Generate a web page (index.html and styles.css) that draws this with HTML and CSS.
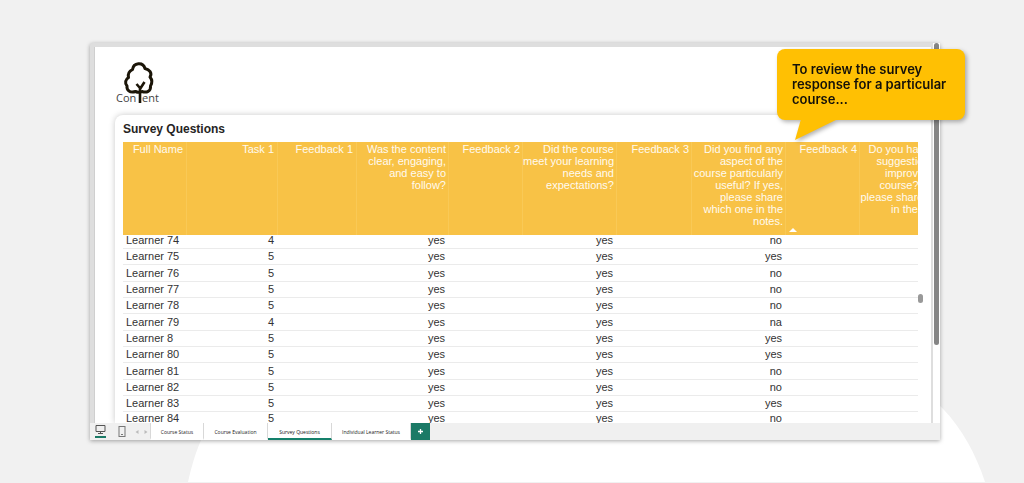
FILE: index.html
```html
<!DOCTYPE html>
<html lang="en">
<head>
<meta charset="utf-8">
<title>Survey Questions</title>
<link rel="stylesheet" href="styles.css">
</head>
<body>
<svg class="backdrop" viewBox="0 0 1024 483" preserveAspectRatio="none" aria-hidden="true"><path d="M188 482C198 438 215 390 290 360H870C930 385 966 424 985 482Z" fill="#fff"/></svg>
<main class="window">
  <div class="report">
    <div class="page">
      <svg class="logo" viewBox="0 0 48 46" role="img" aria-label="Content">
        <g fill="none" stroke="#1b1508" stroke-width="3" stroke-linecap="round" stroke-linejoin="round">
          <path d="M19.500 30.500C13.500 32.500 10.500 28.500 11 25C8.500 22 9.500 18.500 12.500 16.500C11.500 12 14.500 9.500 16.500 8.500C17.500 1.500 27 0.500 29 7.500C33.500 8.500 36.500 12 34 16C36.500 19 36 22.500 34.500 25C35 30.500 30.500 32 26 30.500Q23 32 19.500 30.500Z"/>
          <path d="M24 42V25M24 27L20.500 23M24 28L28.500 21" stroke-width="2.600" stroke-linecap="butt"/>
        </g>
        <text x="0" y="41" class="logo-text">Con</text><text x="26" y="41" class="logo-text">ent</text>
      </svg>
      <section class="card">
        <h1 class="title">Survey Questions</h1>
        <div class="table-area">
          <div class="table-wrap">
            <table class="survey">
              <colgroup><col class="c-name"><col class="c-task"><col class="c-f1"><col class="c-q1"><col class="c-f2"><col class="c-q2"><col class="c-f3"><col class="c-q3"><col class="c-f4"><col class="c-q4"></colgroup>
              <thead><tr>
                <th>Full Name</th><th>Task 1</th><th>Feedback 1</th>
                <th>Was the content<br>clear, engaging,<br>and easy to<br>follow?</th>
                <th>Feedback 2</th>
                <th>Did the course<br>meet your learning<br>needs and<br>expectations?</th>
                <th>Feedback 3</th>
                <th>Did you find any<br>aspect of the<br>course particularly<br>useful? If yes,<br>please share<br>which one in the<br>notes.</th>
                <th class="sorted">Feedback 4<svg class="sort" viewBox="0 0 8 4" aria-hidden="true"><path d="M0 4L4 0L8 4Z" fill="#fff"/></svg></th>
                <th>Do you have any<br>suggestions for<br>improving the<br>course? If yes,<br>please share them<br>in the notes.</th>
              </tr></thead>
              <tbody>
                <tr><td>Learner 74</td><td>4</td><td></td><td>yes</td><td></td><td>yes</td><td></td><td>no</td><td></td><td></td></tr>
                <tr><td>Learner 75</td><td>5</td><td></td><td>yes</td><td></td><td>yes</td><td></td><td>yes</td><td></td><td></td></tr>
                <tr><td>Learner 76</td><td>5</td><td></td><td>yes</td><td></td><td>yes</td><td></td><td>no</td><td></td><td></td></tr>
                <tr><td>Learner 77</td><td>5</td><td></td><td>yes</td><td></td><td>yes</td><td></td><td>no</td><td></td><td></td></tr>
                <tr><td>Learner 78</td><td>5</td><td></td><td>yes</td><td></td><td>yes</td><td></td><td>no</td><td></td><td></td></tr>
                <tr><td>Learner 79</td><td>4</td><td></td><td>yes</td><td></td><td>yes</td><td></td><td>na</td><td></td><td></td></tr>
                <tr><td>Learner 8</td><td>5</td><td></td><td>yes</td><td></td><td>yes</td><td></td><td>yes</td><td></td><td></td></tr>
                <tr><td>Learner 80</td><td>5</td><td></td><td>yes</td><td></td><td>yes</td><td></td><td>yes</td><td></td><td></td></tr>
                <tr><td>Learner 81</td><td>5</td><td></td><td>yes</td><td></td><td>yes</td><td></td><td>no</td><td></td><td></td></tr>
                <tr><td>Learner 82</td><td>5</td><td></td><td>yes</td><td></td><td>yes</td><td></td><td>no</td><td></td><td></td></tr>
                <tr><td>Learner 83</td><td>5</td><td></td><td>yes</td><td></td><td>yes</td><td></td><td>yes</td><td></td><td></td></tr>
                <tr><td>Learner 84</td><td>5</td><td></td><td>yes</td><td></td><td>yes</td><td></td><td>no</td><td></td><td></td></tr>
              </tbody>
            </table>
          </div>
          <div class="inner-scroll"><div class="inner-thumb"></div></div>
        </div>
      </section>
    </div>
    <div class="outer-scroll"><div class="outer-thumb"></div></div>
  </div>
  <nav class="tabs" aria-label="Report pages">
    <button class="view active" aria-label="Desktop layout"><svg viewBox="0 0 11 9"><path d="M1 0.500H10V6.500H1ZM5.500 6.500V8.500M3 8.500H8" fill="none" stroke="#555" stroke-width="1"/></svg></button>
    <button class="view mobile" aria-label="Mobile layout"><svg viewBox="0 0 8 11"><rect x="1" y="0.500" width="6" height="10" fill="none" stroke="#777"/><path d="M3 8.500H5" stroke="#777"/></svg></button>
    <button class="arrow" aria-label="Previous pages"><svg viewBox="0 0 4 4"><path d="M3.500 0L0.500 2L3.500 4Z" fill="#bbb"/></svg></button>
    <button class="arrow" aria-label="Next pages"><svg viewBox="0 0 4 4"><path d="M0.500 0L3.500 2L0.500 4Z" fill="#bbb"/></svg></button>
    <button class="tab tab-first">Course Status</button>
    <button class="tab">Course Evaluation</button>
    <button class="tab current">Survey Questions</button>
    <button class="tab tab-last">Individual Learner Status</button>
    <button class="add" aria-label="New page"><svg viewBox="0 0 7 7"><path d="M3.500 1V6M1 3.500H6" stroke="#fff" stroke-width="1.300"/></svg></button>
  </nav>
  <aside class="callout">To review the survey<br>response for a particular<br>course...
    <svg class="tail" viewBox="0 0 46 22" aria-hidden="true"><path d="M7 0H44L1 21Z" fill="#ffc003"/></svg>
  </aside>
</main>
</body>
</html>
```
FILE: styles.css
```css
* { box-sizing: border-box; }
body { margin: 0; min-height: 100vh; background: #f1f1f1; font-family: "Liberation Sans", Arial, sans-serif; color: #333; position: relative; display: flex; overflow: hidden; }
button { border: 0; margin: 0; padding: 0; background: none; font: inherit; color: inherit; }
svg { display: block; }
.backdrop { position: absolute; inset: 0; width: 100%; height: 100%; }

.window { position: relative; flex: 1; min-width: 0; display: flex; flex-direction: column; margin: 43px 84px 43px 90px; background: #dedede; border-radius: 3px 3px 0 0; box-shadow: 0 1px 4px rgba(0, 0, 0, .35); }
.report { flex: 1; display: flex; min-width: 0; min-height: 0; }
.page { flex: 1; min-width: 0; margin: 4px 0 0 4px; border-left: 1px solid #cfcfcf; border-right: 2px solid #dedede; background: #fff; padding: 14px 0 0 20px; display: flex; flex-direction: column; }
.logo { width: 48px; height: 46px; margin-left: 1px; }
.logo-text { font: 11px "Open Sans", sans-serif; fill: #444; }

.card { flex: 1; margin-top: 8px; padding: 7px 7px 0 8px; border-radius: 8px 8px 0 0; background: #fff; box-shadow: 0 0 6px rgba(0, 0, 0, .22); clip-path: inset(-12px 0 0 -12px); }
.title { margin: 0 0 5px; font-size: 12px; line-height: 15px; font-weight: 700; color: #252423; }
.table-area { display: flex; height: 281px; }
.table-wrap { flex: 1; min-width: 0; overflow: hidden; }
.survey { width: 831px; table-layout: fixed; border-collapse: separate; border-spacing: 0; font-size: 11px; }
.c-name { width: 64px; }
.c-task { width: 91px; }
.c-f1 { width: 79px; }
.c-q1 { width: 92px; }
.c-f2, .c-f4 { width: 74px; }
.c-q2, .c-q3, .c-q4 { width: 94px; }
.c-f3 { width: 75px; }
.survey th { height: 93px; padding: 1px 4px 0 0; background: #f8c246; color: #fffaf0; font-weight: 400; line-height: 12px; text-align: right; vertical-align: top; white-space: nowrap; box-shadow: inset -1px 0 #f9c956; }
.survey th:nth-child(n+4) { padding-right: 3px; }
.survey td { height: 16px; padding: 0 4px 2px 3px; line-height: 11px; text-align: right; vertical-align: bottom; white-space: nowrap; border-bottom: 1px solid #ebebeb; }
.survey td:first-child { text-align: left; }
.survey tr:first-child td { height: 14px; }
.survey tr:nth-child(3n) td { height: 17px; }
.survey tr:last-child td { height: 15px; }
.sorted { position: relative; }
.sort { position: absolute; left: 3px; bottom: 3px; width: 8px; height: 4px; }
.inner-scroll { width: 6px; padding-top: 152px; }
.inner-thumb { width: 5px; height: 9px; border-radius: 3px; background: #999; }
.outer-scroll { width: 7px; background: #fff; padding-left: 1px; }
.outer-thumb { width: 5px; height: 302px; border-radius: 3px; background: #858585; }

.tabs { display: flex; height: 17px; background: #f0f0f0; font: 5px "Open Sans", sans-serif; color: #222; }
.view { width: 21px; display: flex; align-items: center; justify-content: center; }
.active { width: 11px; margin: 0 0 2px 5px; border-bottom: 2px solid #1b7a66; }
.active svg { width: 11px; height: 9px; }
.mobile { margin-left: 5px; }
.mobile svg { width: 8px; height: 11px; }
.arrow { width: 9px; display: flex; align-items: center; justify-content: center; }
.arrow svg { width: 4px; height: 4px; }
.tab { width: 64px; padding-top: 2px; background: #fff; border-right: 1px solid #d8d8d8; border-bottom: 2px solid #fff; text-align: center; white-space: nowrap; }
.tab-first { width: 54px; border-left: 1px solid #d8d8d8; }
.tab-last { width: 79px; }
.current { border-bottom-color: #15806b; color: #111; }
.add { width: 19px; background: #1b7a66; display: flex; align-items: center; justify-content: center; }
.add svg { width: 7px; height: 7px; }

.callout { position: absolute; top: 6px; right: -25px; width: 188px; height: 71px; padding: 13px 0 0 15px; border-radius: 8px; background: #ffc003; color: #14110a; font: 600 13px/15px Inter, sans-serif; white-space: nowrap; filter: drop-shadow(2px 2px 2px rgba(0, 0, 0, .3)); }
.tail { position: absolute; left: 17px; top: 70px; width: 46px; height: 22px; }
```
